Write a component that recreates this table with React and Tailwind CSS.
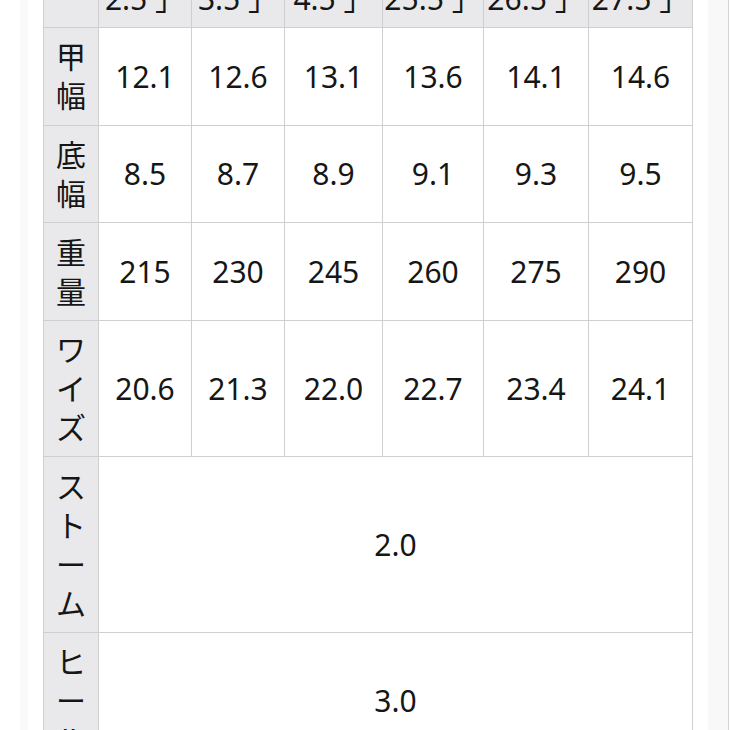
const heads = ["2.5 」", "3.5 」", "4.5 」", "25.5 」", "26.5 」", "27.5 」"];

const rows = [
  { label: "甲幅", values: ["12.1", "12.6", "13.1", "13.6", "14.1", "14.6"] },
  { label: "底幅", values: ["8.5", "8.7", "8.9", "9.1", "9.3", "9.5"] },
  { label: "重量", values: ["215", "230", "245", "260", "275", "290"] },
  { label: "ワイズ", values: ["20.6", "21.3", "22.0", "22.7", "23.4", "24.1"] },
  { label: "ストーム", span: "2.0" },
  { label: "ヒール", span: "3.0" },
];

const cell = "border border-[#cfcfcf] py-[9.3px] text-center align-middle leading-[39px]";

const Label = ({ text }) => (
  <th className={`${cell} bg-[#e9e9eb] font-normal`}>
    {[...text].map((ch, i) => (
      <div key={i}>{ch}</div>
    ))}
  </th>
);

const App = () => {
  return (
    <div
      className="flex h-[730px] w-[730px] overflow-hidden bg-white text-[30px] text-[#161616]"
      style={{ fontFamily: '"Noto Sans", "Noto Sans CJK JP", sans-serif' }}
    >
      <div className="w-[20px] shrink-0" />
      <div className="w-[8px] shrink-0 bg-[#f9f9f9]" />
      <div className="w-[15px] shrink-0" />
      <div className="w-[650px] shrink-0">
        <table className="-mt-[31.5px] w-[650px] table-fixed border-collapse">
          <colgroup>
            <col className="w-[55px]" />
            <col className="w-[93px]" />
            <col className="w-[93px]" />
            <col className="w-[98px]" />
            <col className="w-[101px]" />
            <col className="w-[105px]" />
            <col className="w-[104px]" />
          </colgroup>
          <thead>
            <tr className="bg-[#e9e9eb]">
              <th className={`${cell} font-normal`} />
              {heads.map((h) => (
                <th key={h} className={`${cell} whitespace-nowrap font-normal`}>
                  {h}
                </th>
              ))}
            </tr>
          </thead>
          <tbody>
            {rows.map((r) => (
              <tr key={r.label}>
                <Label text={r.label} />
                {r.span ? (
                  <td colSpan={6} className={`${cell} bg-white`}>
                    {r.span}
                  </td>
                ) : (
                  r.values.map((v, i) => (
                    <td key={i} className={`${cell} bg-white`}>
                      {v}
                    </td>
                  ))
                )}
              </tr>
            ))}
          </tbody>
        </table>
      </div>
      <div className="w-[15px] shrink-0" />
      <div className="w-[20px] shrink-0 bg-[#f8f8f8]" />
      <div className="w-px shrink-0 bg-[#d4d4d4]" />
      <div className="w-px shrink-0" />
    </div>
  );
};

export default App;
